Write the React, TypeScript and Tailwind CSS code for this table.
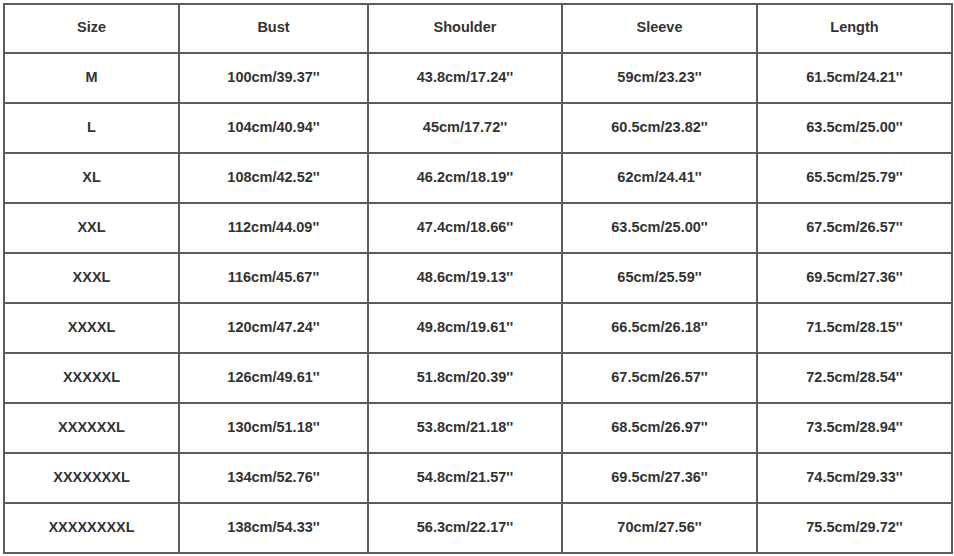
import React from "react";

const headers = ["Size", "Bust", "Shoulder", "Sleeve", "Length"];

const rows: string[][] = [
  ["M", "100cm/39.37''", "43.8cm/17.24''", "59cm/23.23''", "61.5cm/24.21''"],
  ["L", "104cm/40.94''", "45cm/17.72''", "60.5cm/23.82''", "63.5cm/25.00''"],
  ["XL", "108cm/42.52''", "46.2cm/18.19''", "62cm/24.41''", "65.5cm/25.79''"],
  ["XXL", "112cm/44.09''", "47.4cm/18.66''", "63.5cm/25.00''", "67.5cm/26.57''"],
  ["XXXL", "116cm/45.67''", "48.6cm/19.13''", "65cm/25.59''", "69.5cm/27.36''"],
  ["XXXXL", "120cm/47.24''", "49.8cm/19.61''", "66.5cm/26.18''", "71.5cm/28.15''"],
  ["XXXXXL", "126cm/49.61''", "51.8cm/20.39''", "67.5cm/26.57''", "72.5cm/28.54''"],
  ["XXXXXXL", "130cm/51.18''", "53.8cm/21.18''", "68.5cm/26.97''", "73.5cm/28.94''"],
  ["XXXXXXXL", "134cm/52.76''", "54.8cm/21.57''", "69.5cm/27.36''", "74.5cm/29.33''"],
  ["XXXXXXXXL", "138cm/54.33''", "56.3cm/22.17''", "70cm/27.56''", "75.5cm/29.72''"],
];

function Cell({ text, h }: { text: string; h: string }) {
  return (
    <div className={`flex ${h} items-center justify-center bg-white text-[14.5px] font-bold text-[#333]`}>
      {text}
    </div>
  );
}

export default function App() {
  return (
    <div className="min-h-[556px] bg-white pl-[3px] pt-[3px]" style={{ fontFamily: '"Liberation Sans", Arial, sans-serif' }}>
      <div className="grid w-[950px] grid-cols-[173px_187px_192px_193px_193px] gap-[2px] bg-[#5c5c5c] p-[2px]">
        {headers.map((h) => (
          <Cell key={h} text={h} h="h-[47px] pb-[2px]" />
        ))}
        {rows.map((r) =>
          r.map((c, i) => <Cell key={r[0] + i} text={c} h="h-[48px]" />)
        )}
      </div>
    </div>
  );
}
